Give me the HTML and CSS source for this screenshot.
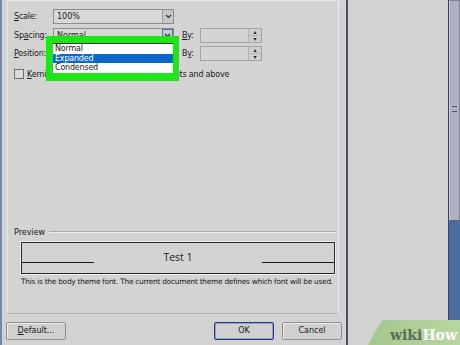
FILE: index.html
```html
<!DOCTYPE html>
<html lang="en">
<head>
    <meta charset="UTF-8">
    <title>Font - Advanced</title>
    <link rel="stylesheet" href="styles.css">
</head>
<body>
    <div class="edge"></div>

    <div class="dialog">
        <div class="page">
            <div class="fields">
                <label class="lbl"><u>S</u>cale:</label>
                <div class="combo"><span>100%</span><i class="drop"><svg width="9" height="9" viewBox="0 0 9 9"><polyline points="2,3 4.5,5.5 7,3" fill="none" stroke="#333" stroke-width="1.1"/></svg></i></div>
                <span></span><span></span><span></span>

                <label class="lbl">Sp<u>a</u>cing:</label>
                <div class="combo"><span>Normal</span><i class="drop active"><svg width="9" height="9" viewBox="0 0 9 9"><polyline points="2,3 4.5,5.5 7,3" fill="none" stroke="#223" stroke-width="1.1"/></svg></i></div>
                <span></span>
                <label class="lbl"><u>B</u>y:</label>
                <div class="spin"><span class="arrows"><b>&#9652;</b><b>&#9662;</b></span></div>

                <label class="lbl"><u>P</u>osition:</label>
                <div class="combo"><span></span><i class="drop"></i></div>
                <span></span>
                <label class="lbl">B<u>y</u>:</label>
                <div class="spin"><span class="arrows"><b>&#9652;</b><b>&#9662;</b></span></div>
            </div>

            <div class="kern">
                <span class="check"></span>
                <span class="kern-text"><u>K</u>erning for fonts:</span>
                <span class="kern-box"></span>
                <span class="kern-text">Points and above</span>
            </div>

            <div class="preview">
                <div class="preview-head"><span>Preview</span><span class="rule"></span></div>
                <div class="preview-box">
                    <span class="line"></span>
                    <span class="sample">Test 1</span>
                    <span class="line"></span>
                </div>
                <p class="note">This is the body theme font. The current document theme defines which font will be used.</p>
            </div>

            <!-- open dropdown of the Spacing box, with the tutorial highlight -->
            <div class="popup">
                <ul>
                    <li>Normal</li>
                    <li class="sel">Expanded</li>
                    <li>Condensed</li>
                </ul>
            </div>
        </div>

        <div class="footer">
            <button class="btn"><u>D</u>efault...</button>
            <span class="grow"></span>
            <button class="btn ok">OK</button>
            <button class="btn">Cancel</button>
        </div>
    </div>

    <div class="desk"></div>

    <div class="scroll">
        <div class="thumb"><span class="grip"></span></div>
        <div class="track"></div>
    </div>

    <div class="wm"><span class="wiki">wiki</span><span class="how">How</span></div>
</body>
</html>
```

FILE: styles.css
```css
body {
    margin: 0;
    width: 460px;
    height: 345px;
    overflow: hidden;
    display: flex;
    background-color: #d2d2d2;
    font-family: "DejaVu Sans", sans-serif;
    font-size: 8px;
    color: #1a1a1a;
    position: relative;
}

u {
    text-decoration: underline;
}

.edge {
    width: 2px;
    background-color: #6f88b4;
}

.dialog {
    width: 344px;
    border-right: 2px solid #4a4c6c;
    display: flex;
    flex-direction: column;
    background-color: #d3d3d3;
}

.page {
    position: relative;
    height: 314px;
    margin-left: 5px;
    width: 332px;
    padding-left: 6px;
    border-left: 1px solid #e2e2e2;
    border-right: 1px solid #ececec;
    border-top: 1px solid #e6e6e6;
    border-bottom: 1px solid #b4b4b4;
    box-sizing: border-box;
    display: flex;
    flex-direction: column;
}

.fields {
    margin-top: 8px;
    display: grid;
    grid-template-columns: 39px 121px 8px 18px 62px;
    grid-template-rows: 15px 15px 15px;
    row-gap: 3.5px;
    align-items: center;
}

.lbl {
    letter-spacing: -0.2px;
}

.combo {
    height: 15px;
    box-sizing: border-box;
    border: 1px solid #8c8c8c;
    background-color: #d8d8d8;
    display: flex;
    align-items: center;
    padding-left: 3px;
}

.combo span {
    flex: 1;
}

.drop {
    width: 11px;
    height: 13px;
    box-sizing: border-box;
    border-left: 1px solid #a0a0a0;
    background-color: #c8c8c8;
    display: flex;
    align-items: center;
    justify-content: center;
}

.drop.active {
    border: 1px solid #5a6e9c;
    background-color: #c4ccdc;
}

.spin {
    height: 15px;
    box-sizing: border-box;
    border: 1px solid #a4a4a4;
    background-color: #d4d4d4;
    display: flex;
    justify-content: flex-end;
}

.arrows {
    width: 12px;
    display: flex;
    flex-direction: column;
    border-left: 1px solid #b4b4b4;
}

.arrows b {
    flex: 1;
    font-size: 6px;
    line-height: 6px;
    text-align: center;
    font-weight: normal;
    color: #222;
    background-color: #cfcfcf;
}

.arrows b + b {
    border-top: 1px solid #b4b4b4;
}

.kern {
    margin-top: 7px;
    display: flex;
    align-items: center;
    height: 12px;
}

.check {
    width: 10px;
    height: 10px;
    box-sizing: border-box;
    border: 1px solid #6e6e6e;
    background-color: #dcdcdc;
    margin-right: 3px;
}

.kern-text {
    letter-spacing: -0.2px;
    white-space: nowrap;
}

.kern-box {
    width: 61px;
    height: 14px;
    box-sizing: border-box;
    border: 1px solid #9a9a9a;
    margin: 0 4px 0 6px;
}

.preview {
    margin-top: auto;
    padding-bottom: 27px;
}

.preview-head {
    display: flex;
    align-items: center;
    height: 10px;
}

.preview-head .rule {
    flex: 1;
    margin-left: 4px;
    margin-right: 2px;
    border-top: 1px solid #a8a8a8;
    border-bottom: 1px solid #ececec;
}

.preview-box {
    margin: 5px 3px 0 7px;
    height: 32px;
    box-sizing: border-box;
    border: 1px solid #2a2a2a;
    outline: 1px solid #eeeeee;
    display: flex;
    align-items: center;
}

.preview-box .line {
    width: 72px;
    height: 1px;
    background-color: #1e1e1e;
    margin-top: 8px;
}

.sample {
    flex: 1;
    text-align: center;
    font-family: "Open Sans", sans-serif;
    font-size: 10.5px;
    margin-top: -3px;
}

.note {
    margin: 3px 0 0 7px;
    font-size: 7.4px;
    letter-spacing: -0.25px;
    white-space: nowrap;
}

.popup {
    position: absolute;
    left: 38px;
    top: 35px;
    border: 7px solid #1ee41a;
    border-right-width: 6px;
    border-bottom-width: 8px;
}

.popup ul {
    list-style: none;
    margin: 0;
    padding: 0;
    width: 120px;
    background-color: #ffffff;
    border-top: 1px solid #3a3a3a;
}

.popup li {
    height: 9.5px;
    line-height: 9.5px;
    padding-left: 2px;
    letter-spacing: -0.2px;
}

.popup li.sel {
    background-color: #0c66cc;
    color: #ffffff;
}

.footer {
    flex: 1;
    display: flex;
    align-items: center;
    padding: 2px 4px 0 4px;
    gap: 8px;
}

.grow {
    flex: 1;
}

.btn {
    width: 60px;
    height: 18px;
    box-sizing: border-box;
    border: 1px solid #8e8e8e;
    border-radius: 2px;
    background-color: #d0d0d0;
    box-shadow: inset 1px 1px 0 #ececec;
    font-family: "DejaVu Sans", sans-serif;
    font-size: 8px;
    color: #1a1a1a;
    padding: 0;
}

.btn.ok {
    border-color: #2c3a78;
    box-shadow: inset 0 0 0 1px #8aa0cc;
}

.desk {
    width: 100px;
    background-color: #d2d2d2;
}

.scroll {
    width: 11px;
    border-left: 1px solid #3e405c;
    display: flex;
    flex-direction: column;
}

.thumb {
    height: 221px;
    background-color: #adb1c2;
    border: 1px solid #7c8298;
    border-left-color: #c8ccd8;
    border-bottom: 1px solid #5a5e78;
    box-sizing: border-box;
    display: flex;
    align-items: center;
    justify-content: center;
}

.grip {
    width: 5px;
    height: 4px;
    border-top: 1px solid #555;
    border-bottom: 1px solid #555;
    margin-top: -4px;
}

.track {
    flex: 1;
    background-color: #4d6c9e;
}

.wm {
    position: absolute;
    right: 0;
    bottom: 0;
    width: 92px;
    height: 25px;
    background: linear-gradient(90deg, #a6c690, #b8d6a2);
    clip-path: polygon(14px 0, 100% 0, 100% 100%, 0 100%);
    display: flex;
    align-items: flex-end;
    justify-content: flex-end;
    padding-right: 3px;
    box-sizing: border-box;
    font-family: "DejaVu Serif", serif;
    font-weight: bold;
    font-size: 14px;
    line-height: 20px;
}

.wiki {
    color: #5e6e56;
}

.how {
    color: #ffffff;
}
```
